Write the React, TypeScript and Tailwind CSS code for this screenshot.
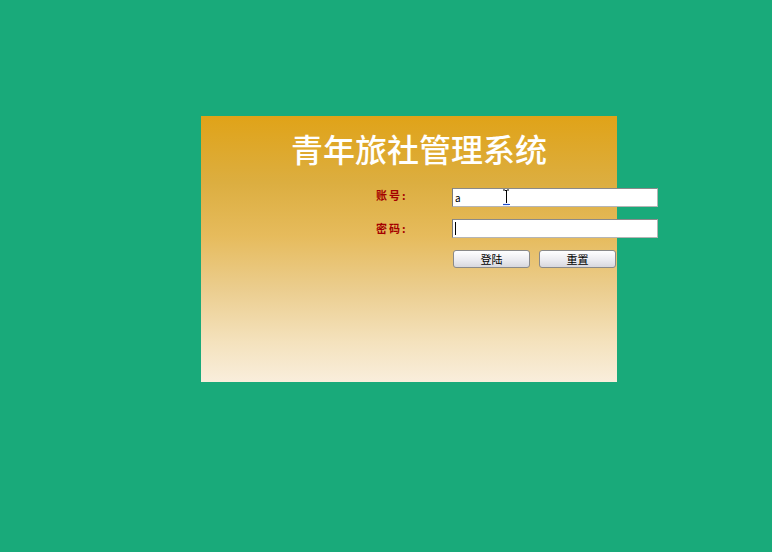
import React from 'react';

const cjk = '"Noto Sans CJK SC", "Liberation Sans", sans-serif';

function IBeam() {
  return (
    <svg
      className="pointer-events-none absolute left-[50px] top-[6px]"
      width="9"
      height="17"
      viewBox="0 0 9 17"
      aria-hidden
    >
      <path d="M1 1h2l1 1 1-1h2M4.5 2v12" stroke="#000" strokeWidth="1" fill="none" />
      <path d="M1 15.5h7" stroke="#1f4fd0" strokeWidth="1.2" fill="none" />
    </svg>
  );
}

export default function App() {
  return (
    <div
      className="h-[552px] w-[772px] bg-[#19aa7a] pl-[201px] pt-[116px]"
      style={{ fontFamily: cjk }}
    >
      <div className="flex h-[266px] w-[416px] flex-col bg-[linear-gradient(to_bottom,#e0a318_0%,#dcae40_25%,#e6bb5c_45%,#ebcd8e_65%,#f4e2bd_85%,#f9eedc_100%)]">
        <h1 className="pl-[90px] pt-[14px] text-[32px] leading-[36px] font-medium text-white">
          青年旅社管理系统
        </h1>

        <div className="mt-[17px] flex flex-col gap-[12px] pl-[175px]">
          <div className="flex items-center">
            <label className="w-[76px] shrink-0 text-[11px] font-bold tracking-[2px] text-[#a40000]">
              账号:
            </label>
            <div className="relative shrink-0">
              <input
                defaultValue="a"
                className="h-[19px] w-[206px] border border-[#b5b5b5] border-l-[#7a7a7a] border-t-[#8a8a8a] bg-white px-[2px] text-[10px] text-black outline-none"
              />
              <IBeam />
            </div>
          </div>
          <div className="flex items-center">
            <label className="w-[76px] shrink-0 text-[11px] font-bold tracking-[2px] text-[#a40000]">
              密码:
            </label>
            <div className="relative h-[19px] w-[206px] shrink-0 border border-[#b5b5b5] border-l-[#7a7a7a] border-t-[#8a8a8a] bg-white">
              <span className="absolute left-[2px] top-[2px] h-[13px] w-px bg-black" />
            </div>
          </div>
          <div className="flex gap-[9px] pl-[77px]">
            <button
              type="button"
              className="h-[18px] w-[77px] shrink-0 rounded-[3px] border border-[#8a8a8a] bg-[linear-gradient(to_bottom,#ffffff,#ececf0_55%,#d8d8de)] text-[11px] leading-[14px] text-black"
            >
              登陆
            </button>
            <button
              type="button"
              className="h-[18px] w-[77px] shrink-0 rounded-[3px] border border-[#8a8a8a] bg-[linear-gradient(to_bottom,#ffffff,#ececf0_55%,#d8d8de)] text-[11px] leading-[14px] text-black"
            >
              重置
            </button>
          </div>
        </div>
      </div>
    </div>
  );
}
